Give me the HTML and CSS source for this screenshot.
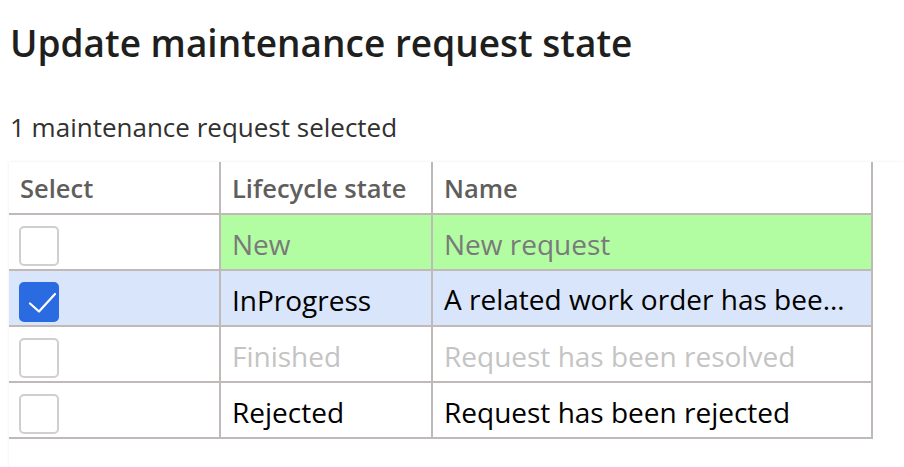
FILE: index.html
```html
<!DOCTYPE html>
<html lang="en">
<head>
<meta charset="utf-8">
<title>Update maintenance request state</title>
<link rel="stylesheet" href="styles.css">
</head>
<body>
<div class="page">
  <h1 class="title">Update maintenance request state</h1>
  <p class="subtitle">1 maintenance request selected</p>
  <div class="panel">
    <div class="grid">
      <div class="cell head">Select</div>
      <div class="cell head">Lifecycle state</div>
      <div class="cell head">Name</div>

      <div class="cell check"><span class="box"></span></div>
      <div class="cell text state-new">New</div>
      <div class="cell text state-new">New request</div>

      <div class="cell check sel"><span class="box on"><svg viewBox="0 0 40 40" width="40" height="40"><path d="M11 21.5 L20 29.5 L36 12" fill="none" stroke="#fff" stroke-width="2.2" stroke-linecap="round" stroke-linejoin="round"/></svg></span></div>
      <div class="cell text sel">InProgress</div>
      <div class="cell text sel ellipsis">A related work order has been created</div>

      <div class="cell check"><span class="box"></span></div>
      <div class="cell text dim">Finished</div>
      <div class="cell text dim">Request has been resolved</div>

      <div class="cell check"><span class="box"></span></div>
      <div class="cell text">Rejected</div>
      <div class="cell text">Request has been rejected</div>
    </div>
  </div>
</div>
</body>
</html>
```

FILE: styles.css
```css
html, body {
  margin: 0;
  padding: 0;
  background: #fff;
}
body {
  font-family: "Open Sans", "Noto Sans", sans-serif;
  color: #201f1e;
  overflow: hidden;
}
.page {
  display: flex;
  flex-direction: column;
  height: 467px;
}
.title {
  margin: 0;
  padding: 18px 0 0 10px;
  font-size: 37px;
  font-weight: 600;
  line-height: 50px;
  color: #201f1e;
}
.subtitle {
  margin: 0;
  padding: 41px 0 0 10px;
  font-size: 26px;
  line-height: 36px;
  color: #323130;
}
.panel {
  margin: 17px 0 0 9px;
  flex: 1;
  background: #fff;
  box-shadow: 0 0 3px rgba(0,0,0,0.08);
}
.grid {
  display: grid;
  grid-template-columns: 212px 212px 440px;
  grid-template-rows: 53px repeat(4, 56px);
  width: 864px;
}
.cell {
  border-right: 2px solid #bfbab7;
  border-bottom: 2px solid #bfbab7;
  padding: 0 11px;
  display: flex;
  align-items: center;
  font-size: 28px;
  color: #000;
  white-space: nowrap;
  overflow: hidden;
  min-width: 0;
}
.text {
  padding-top: 3px;
}
.head {
  font-weight: 600;
  color: #605e5c;
  font-size: 25.5px;
}
.check {
  padding: 8px 10px 0;
}
.box {
  width: 40px;
  height: 40px;
  box-sizing: border-box;
  border: 2px solid #cfcfcf;
  border-radius: 5px;
  background: #fff;
}
.box.on {
  background: #2b6be2;
  border-color: #2b6be2;
}
.box.on svg {
  display: block;
  margin: -2px;
}
.state-new {
  background: #b2fda2;
  color: #7a7a7a;
}
.sel {
  background: #d9e5fa;
}
.dim {
  color: #c4c4c4;
}
.ellipsis {
  display: block;
  line-height: 51px;
  text-overflow: ellipsis;
}
```
